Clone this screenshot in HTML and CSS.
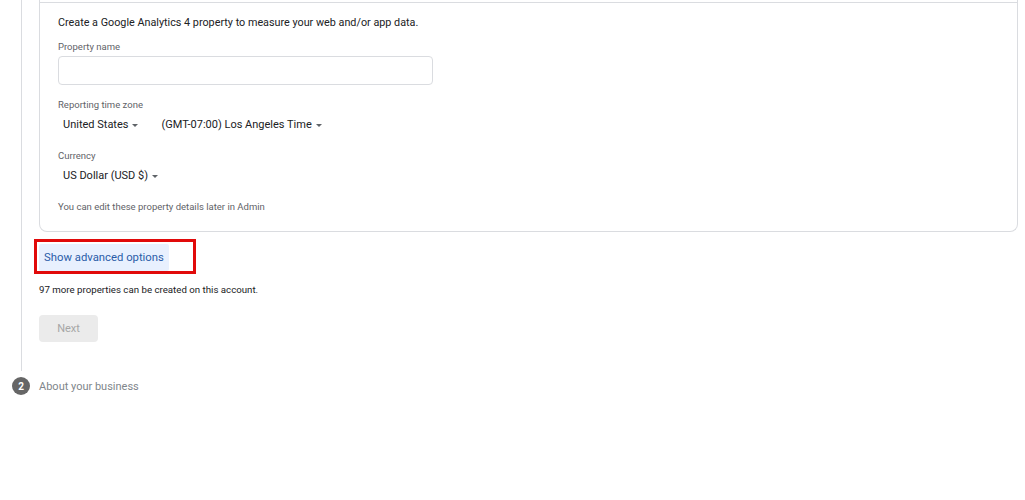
FILE: index.html
```html
<!DOCTYPE html>
<html lang="en">
<head>
  <meta charset="UTF-8">
  <title>Create property</title>
  <link rel="stylesheet" href="styles.css">
</head>
<body>
  <div class="stepper">
    <!-- Step 1: property setup -->
    <div class="step-body">
      <div class="card">
        <div class="card-head"></div>
        <div class="card-content">
          <p class="intro">Create a Google Analytics 4 property to measure your web and/or app data.</p>

          <label class="field-label" for="propName">Property name</label>
          <input type="text" id="propName" class="text-input">

          <div class="field-label spaced">Reporting time zone</div>
          <div class="select-row">
            <span class="select">United States <span class="caret"></span></span>
            <span class="select">(GMT-07:00) Los Angeles Time <span class="caret"></span></span>
          </div>

          <div class="field-label spaced">Currency</div>
          <div class="select-row">
            <span class="select">US Dollar (USD $) <span class="caret"></span></span>
          </div>

          <p class="hint">You can edit these property details later in Admin</p>
        </div>
      </div>

      <div class="highlight">
        <button class="btn-advanced">Show advanced options</button>
      </div>

      <p class="quota">97 more properties can be created on this account.</p>

      <button class="btn-next" disabled>Next</button>
    </div>

    <!-- Step 2 -->
    <div class="step-head">
      <span class="step-num">2</span>
      <span class="step-title">About your business</span>
    </div>
  </div>
</body>
</html>
```

FILE: styles.css
```css
* {
  box-sizing: border-box;
}

body {
  margin: 0;
  font-family: Roboto, "Noto Sans", Arial, sans-serif;
  color: #202124;
  background: #fff;
}

p {
  margin: 0;
}

/* Stepper rail */
.step-body {
  margin-left: 21px;
  border-left: 1px solid #dadce0;
  padding: 0 7px 29px 17px;
  min-height: 370px;
}

/* Card */
.card {
  border: 1px solid #dadce0;
  border-top: none;
  border-radius: 0 0 8px 8px;
}

.card-head {
  height: 3px;
  border-bottom: 1px solid #dadce0;
}

.card-content {
  padding: 12px 18px 17px;
  display: flex;
  flex-direction: column;
  align-items: flex-start;
}

.intro {
  font-size: 10.8px;
  line-height: 16px;
  margin-bottom: 9px;
}

.field-label {
  font-size: 9.5px;
  line-height: 14px;
  color: #5f6368;
}

.field-label.spaced {
  margin-top: 13px;
}

.text-input {
  width: 375px;
  height: 29px;
  margin-top: 2px;
  border: 1px solid #dadce0;
  border-radius: 4px;
  font: inherit;
}

.select-row {
  display: flex;
  gap: 23px;
  margin-top: 5px;
  padding-left: 5px;
}

.select {
  font-size: 11px;
  line-height: 16px;
  display: inline-flex;
  align-items: center;
  gap: 4px;
}

.caret {
  width: 0;
  height: 0;
  border-left: 3px solid transparent;
  border-right: 3px solid transparent;
  border-top: 3px solid #5f6368;
}

.select-row + .field-label.spaced {
  margin-top: 16px;
}

.hint {
  font-size: 9.5px;
  line-height: 14px;
  color: #5f6368;
  margin-top: 16px;
}

/* Annotation box around the advanced button */
.highlight {
  display: inline-block;
  margin: 7px 0 0 -5px;
  padding: 2px 24px 0 2px;
  border: 3px solid #e10a0a;
}

.btn-advanced {
  display: block;
  width: 130px;
  height: 27px;
  border: none;
  border-radius: 2px;
  background: #e8f0fe;
  color: #2a5ca8;
  font-family: inherit;
  font-size: 11.3px;
  padding: 0;
}

.quota {
  font-size: 9.7px;
  line-height: 14px;
  margin-top: 9px;
}

.btn-next {
  display: block;
  margin-top: 18px;
  width: 59px;
  height: 27px;
  border: none;
  border-radius: 4px;
  background: #ebebeb;
  color: #a6a6a6;
  font-family: inherit;
  font-size: 11px;
}

/* Step header */
.step-head {
  display: flex;
  align-items: center;
  gap: 9px;
  margin: 6px 0 0 12px;
}

.step-num {
  width: 18px;
  height: 18px;
  border-radius: 50%;
  background: #666;
  color: #fff;
  font-size: 10px;
  font-weight: 700;
  display: flex;
  align-items: center;
  justify-content: center;
}

.step-title {
  font-size: 11px;
  color: #80868b;
}
```
